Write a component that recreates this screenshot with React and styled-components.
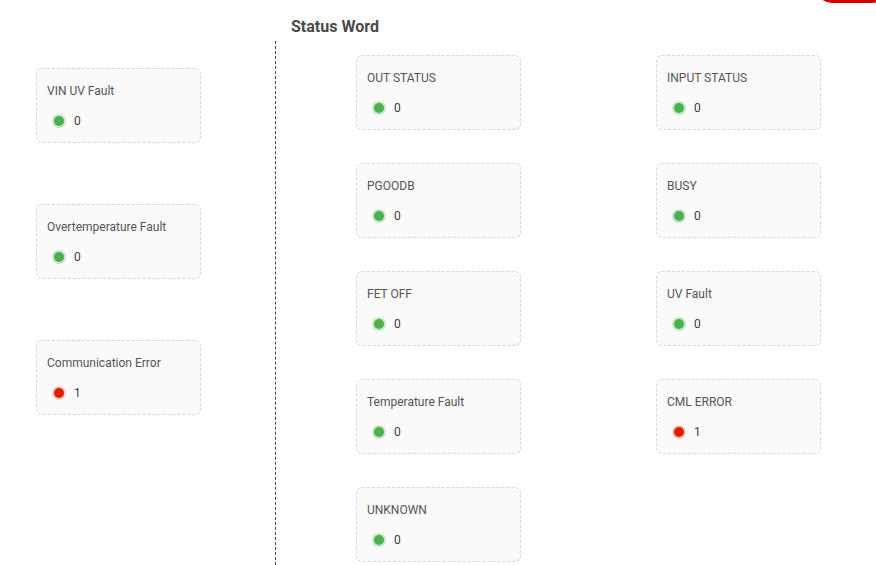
import React from 'react';
import styled, { createGlobalStyle } from 'styled-components';

const GlobalStyle = createGlobalStyle`
  html, body {
    margin: 0;
    padding: 0;
    background: #fff;
    font-family: Roboto, "Liberation Sans", sans-serif;
    overflow: hidden;
  }
`;

const Page = styled.div`
  position: relative;
  width: 876px;
  height: 565px;
  overflow: hidden;
`;

const Corner = styled.div`
  position: absolute;
  top: -30px;
  right: -12px;
  width: 72px;
  height: 33px;
  border-radius: 16px;
  background: #d50000;
`;

const Header = styled.div`
  display: flex;
  height: 41px;
  box-sizing: border-box;
  padding-top: 18px;
`;

const Spacer = styled.div`
  width: 276px;
  flex-shrink: 0;
`;

const Title = styled.h2`
  margin: 0;
  padding-left: 15px;
  font-size: 16px;
  line-height: 18px;
  font-weight: 700;
  color: #4a4a4a;
`;

const Body = styled.div`
  display: flex;
  height: 524px;
`;

const LeftPanel = styled.div`
  width: 275px;
  flex-shrink: 0;
  box-sizing: border-box;
  padding: 27px 0 0 36px;
  display: flex;
  flex-direction: column;
  gap: 61px;
`;

const RightPanel = styled.div`
  flex: 1;
  border-left: 1px dashed #444;
  box-sizing: border-box;
  padding: 14px 0 0 80px;
`;

const Grid = styled.div`
  display: grid;
  grid-template-columns: 165px 165px;
  column-gap: 135px;
  row-gap: 33px;
`;

const Card = styled.div`
  width: 165px;
  height: 75px;
  box-sizing: border-box;
  border: 1px dashed #d8d8d8;
  border-radius: 6px;
  background: #fafafa;
  padding: 14px 10px 0 10px;
`;

const Label = styled.div`
  font-size: 12px;
  line-height: 16px;
  color: #555;
`;

const ValueRow = styled.div`
  display: flex;
  align-items: center;
  height: 12px;
  margin-top: 16px;
  padding-left: 7px;
`;

const Dot = styled.span`
  width: 10px;
  height: 10px;
  border-radius: 50%;
  background: ${p => (p.$on ? '#dd1f00' : '#4caf50')};
  box-shadow: 0 0 0 2px ${p => (p.$on ? 'rgba(221,31,0,0.22)' : 'rgba(76,175,80,0.28)')};
`;

const Value = styled.span`
  margin-left: 10px;
  font-size: 12px;
  line-height: 12px;
  color: #3a3a3a;
`;

const leftItems = [
  { label: 'VIN UV Fault', value: 0 },
  { label: 'Overtemperature Fault', value: 0 },
  { label: 'Communication Error', value: 1 },
];

const statusItems = [
  { label: 'OUT STATUS', value: 0 },
  { label: 'INPUT STATUS', value: 0 },
  { label: 'PGOODB', value: 0 },
  { label: 'BUSY', value: 0 },
  { label: 'FET OFF', value: 0 },
  { label: 'UV Fault', value: 0 },
  { label: 'Temperature Fault', value: 0 },
  { label: 'CML ERROR', value: 1 },
  { label: 'UNKNOWN', value: 0 },
];

function StatusCard({ label, value }) {
  return (
    <Card>
      <Label>{label}</Label>
      <ValueRow>
        <Dot $on={value === 1} />
        <Value>{value}</Value>
      </ValueRow>
    </Card>
  );
}

export default function App() {
  return (
    <Page>
      <GlobalStyle />
      <Corner />
      <Header>
        <Spacer />
        <Title>Status Word</Title>
      </Header>
      <Body>
        <LeftPanel>
          {leftItems.map(item => (
            <StatusCard key={item.label} {...item} />
          ))}
        </LeftPanel>
        <RightPanel>
          <Grid>
            {statusItems.map(item => (
              <StatusCard key={item.label} {...item} />
            ))}
          </Grid>
        </RightPanel>
      </Body>
    </Page>
  );
}
